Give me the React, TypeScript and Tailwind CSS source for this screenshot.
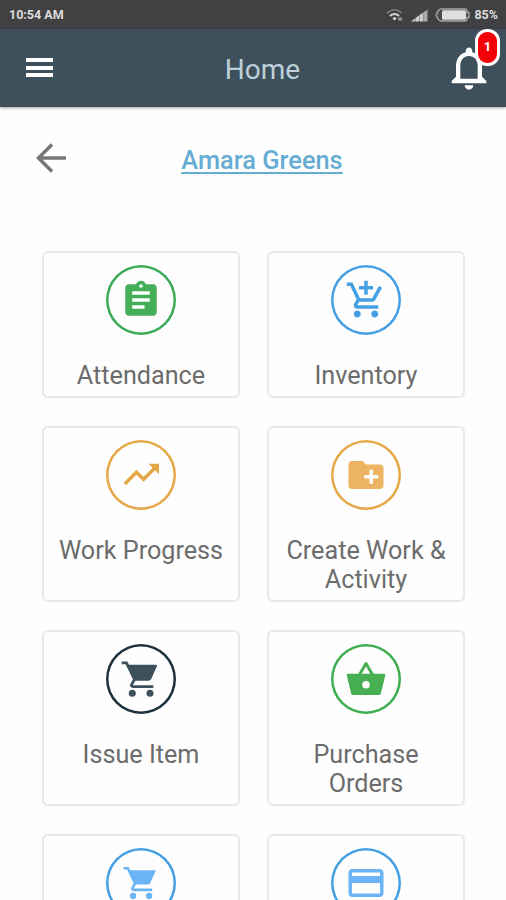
import type { ComponentType } from "react";
import { MdAddShoppingCart, MdAssignment, MdCreateNewFolder, MdCreditCard, MdNotificationsNone } from "react-icons/md";

type IconProps = { size?: number; className?: string };
type Tile = { label: string; icon: ComponentType<IconProps>; ring: string; color: string; size?: number };

function Cart({ size = 42, className }: IconProps) {
  return (
    <svg width={size} height={size} viewBox="0 0 42 42" fill="none" stroke="currentColor" className={className}>
      <path d="M1.7 4.8H6.5L14.5 21.5L11.6 26.5Q10.8 28.6 13 28.6H33.3" strokeWidth="2.8" />
      <path d="M8 6.8H36Q37.6 6.8 36.9 8.3L31.2 21Q30.4 22.7 28.7 22.7H14.5Z" fill="currentColor" stroke="none" />
      <circle cx="12.3" cy="35.3" r="3.5" fill="currentColor" stroke="none" />
      <circle cx="30" cy="35.3" r="3.5" fill="currentColor" stroke="none" />
    </svg>
  );
}

function Basket({ size = 42, className }: IconProps) {
  return (
    <svg width={size} height={size} viewBox="0 0 42 42" fill="none" className={className}>
      <path d="M14 17.5L21 5.5L28 17.5" stroke="currentColor" strokeWidth="3" strokeLinejoin="round" />
      <path
        fillRule="evenodd"
        d="M2.8 15.8H39.2Q40.7 15.8 40.3 17.3L35.9 35.5Q35.5 37 34 37H8Q6.5 37 6.1 35.5L1.7 17.3Q1.3 15.8 2.8 15.8ZM21 22.9A3.8 3.8 0 1 0 21 30.5A3.8 3.8 0 1 0 21 22.9Z"
        fill="currentColor"
      />
    </svg>
  );
}

function Trend({ size = 42, className }: IconProps) {
  return (
    <svg width={size} height={size} viewBox="0 0 42 42" fill="none" className={className}>
      <path d="M4.8 30L16.4 18.3L23.6 25.3L36 12.8" stroke="currentColor" strokeWidth="3.5" />
      <path d="M28.6 9.8H39V20.2Z" fill="currentColor" />
    </svg>
  );
}

const rows: { height: string; tiles: Tile[] }[] = [
  {
    height: "h-[147px]",
    tiles: [
      { label: "Attendance", icon: MdAssignment, ring: "shadow-[inset_0_0_0_2.5px_#3daa57]", color: "text-[#45ae58]" },
      { label: "Inventory", icon: MdAddShoppingCart, ring: "shadow-[inset_0_0_0_2.5px_#449fe3]", color: "text-[#449fe3]" },
    ],
  },
  {
    height: "h-[176px]",
    tiles: [
      { label: "Work Progress", icon: Trend, ring: "shadow-[inset_0_0_0_2.5px_#e5a846]", color: "text-[#e5a846]" },
      { label: "Create Work & Activity", icon: MdCreateNewFolder, ring: "shadow-[inset_0_0_0_2.5px_#e5a846]", color: "text-[#ecb360]" },
    ],
  },
  {
    height: "h-[176px]",
    tiles: [
      { label: "Issue Item", icon: Cart, ring: "shadow-[inset_0_0_0_2.5px_#1c303c]", color: "text-[#3c515c]" },
      { label: "Purchase Orders", icon: Basket, ring: "shadow-[inset_0_0_0_2.5px_#3fae50]", color: "text-[#48b052]" },
    ],
  },
  {
    height: "h-[176px]",
    tiles: [
      { label: "", icon: Cart, ring: "shadow-[inset_0_0_0_2.5px_#449fe3]", color: "text-[#6bb4f5]", size: 38 },
      { label: "", icon: MdCreditCard, ring: "shadow-[inset_0_0_0_2.5px_#449fe3]", color: "text-[#6bb4f5]" },
    ],
  },
];

function StatusBar() {
  return (
    <div className="flex h-[29px] shrink-0 items-center justify-between bg-[#414143] pr-[8px] pl-[9px] text-[12.5px] font-bold text-[#dcdcdc]">
      <span className="pt-px">10:54 AM</span>
      <div className="flex items-center pt-px">
        <svg width="18" height="14" viewBox="0 0 18 14" fill="none">
          <path d="M1 5.2C5 .8 12 .8 15.5 5.2" stroke="#77787a" strokeWidth="1.7" />
          <path d="M4 8C6.5 5.2 10.5 5.2 13 8" stroke="#d2d2d2" strokeWidth="2" />
          <path d="M6.5 10.2C7.8 9 9.2 9 10.5 10.2L8.5 12.5Z" fill="#e4e4e4" />
          <path d="M12 9.5h4v3h-4z" fill="#929294" />
        </svg>
        <svg className="ml-[7px]" width="17" height="13" viewBox="0 0 17 13">
          <path d="M0 12.5L4 9.5V12.5ZM4.4 9L8 6.5V12.5H4.4ZM8.4 6L11.9 3.8V12.5H8.4Z" fill="#cfcfcf" />
          <path d="M12.2 3.4L16.5.5V12.5H12.2Z" fill="#aaaaac" />
        </svg>
        <svg className="ml-[7px]" width="35" height="14" viewBox="0 0 35 14">
          <path d="M6 1H30Q32 1 32 3V4.5H34V9.5H32V11Q32 13 30 13H6Q3.5 13 1 7Q3.5 1 6 1Z" fill="#4a4a4c" stroke="#a6a6a8" strokeWidth="1.4" />
          <rect x="7" y="2.3" width="24" height="9.4" rx="1.5" fill="#dededf" />
        </svg>
        <span className="ml-[4px] text-[12.5px]">85%</span>
      </div>
    </div>
  );
}

function Header() {
  return (
    <header className="grid h-[78px] shrink-0 grid-cols-[1fr_auto_1fr] items-center border-b border-[#344851] bg-[#3d505b] pl-[26px] shadow-[0_1px_3px_rgba(0,0,0,0.35)]">
      <div className="flex w-[27px] flex-col gap-[3.5px]">
        <div className="h-1 bg-white" />
        <div className="h-1 bg-white" />
        <div className="h-1 bg-white" />
      </div>
      <h1 className="pt-[4px] pr-[7px] text-[28px] leading-none text-[#bdd0db]">Home</h1>
      <div className="relative mr-[11px] justify-self-end">
        <MdNotificationsNone size={52} className="text-white" />
        <span className="absolute -top-[13px] left-[32px] flex h-[37px] w-[25px] items-center justify-center rounded-[12px] border-[3px] border-white bg-[#f40008] text-[13px] font-bold text-white">
          1
        </span>
      </div>
    </header>
  );
}

function TileCard({ tile, height }: { tile: Tile; height: string }) {
  const Icon = tile.icon;
  return (
    <div className={`flex w-[198px] flex-col items-center rounded-[6px] border-2 border-[#e8e8e8] px-2 pt-[12px] ${height}`}>
      <div className={`flex size-[70px] shrink-0 items-center justify-center rounded-full ${tile.ring}`}>
        <Icon size={tile.size ?? 42} className={tile.color} />
      </div>
      <div className="mt-[25.5px] text-center text-[25.2px] leading-[29.3px] text-[#6c6c6c]">{tile.label}</div>
    </div>
  );
}

export default function App() {
  return (
    <div className="flex h-[900px] w-[506px] flex-col overflow-hidden bg-[#fefefe] font-['Roboto',sans-serif]">
      <StatusBar />
      <Header />
      <div className="grid h-[144px] shrink-0 grid-cols-[1fr_auto_1fr] items-start px-[36px] pt-[36px]">
        <svg width="31" height="31" viewBox="0 0 31 31" fill="none" stroke="#777" strokeWidth="3.5">
          <path d="M30 15H3M16 1.5L2.5 15L16 28.5" />
        </svg>
        <a className="ml-[18px] pt-[1px] text-[25.4px] leading-[32px] font-medium text-[#66add3] underline decoration-[1.5px] underline-offset-[3px]">
          Amara Greens
        </a>
      </div>
      <main className="flex shrink-0 flex-col gap-[28px] pl-[42px]">
        {rows.map((row, i) => (
          <div key={i} className="flex gap-[27px]">
            {row.tiles.map((tile, j) => (
              <TileCard key={j} tile={tile} height={row.height} />
            ))}
          </div>
        ))}
      </main>
    </div>
  );
}
